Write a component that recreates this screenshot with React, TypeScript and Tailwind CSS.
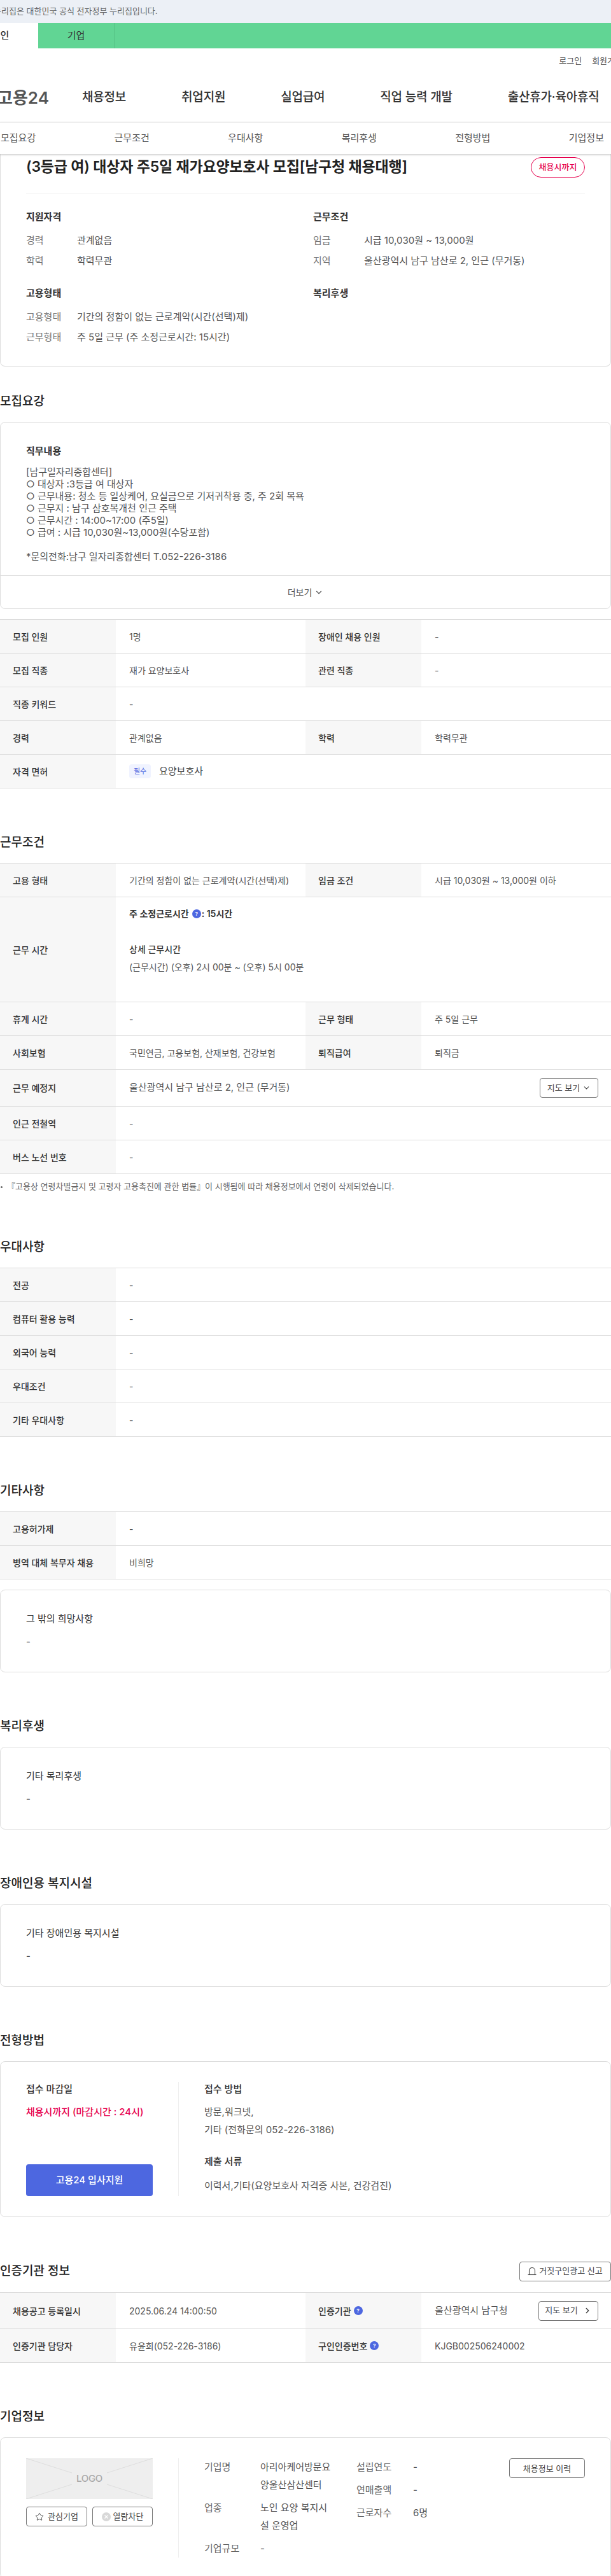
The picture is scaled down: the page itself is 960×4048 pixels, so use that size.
import React from "react";
import { ChevronDown, ChevronRight, Star } from "lucide-react";

const Help = ({ className = "" }: { className?: string }) => (
  <span className={`inline-flex h-[14px] w-[14px] shrink-0 items-center justify-center rounded-full bg-[#4d67e0] text-[8px] font-bold leading-none text-white ${className}`}>?</span>
);

const Row = ({ h = "h-[53px]", children }: { h?: string; children: React.ReactNode }) => (
  <div className={`flex border-b border-[#ddd] ${h}`}>{children}</div>
);

const L = ({ children }: { children: React.ReactNode }) => (
  <div className="flex w-[182px] shrink-0 items-center gap-1 bg-[#f7f7f7] pl-5 text-[14px] font-medium text-[#333]">{children}</div>
);

const V = ({ children, wide }: { children: React.ReactNode; wide?: boolean }) => (
  <div className={`flex items-center pl-[21px] text-[14px] text-[#555] ${wide ? "flex-1 pr-5" : "w-[298px] shrink-0"}`}>{children}</div>
);

const Table = ({ children }: { children: React.ReactNode }) => (
  <div className="border-t border-[#ddd]">{children}</div>
);

const Heading = ({ children, top = "mt-[71px]" }: { children: React.ReactNode; top?: string }) => (
  <h2 className={`${top} mb-[18px] h-[28px] text-[19px] font-medium leading-[28px] text-[#222]`}>{children}</h2>
);

const Card = ({ children, className = "" }: { children: React.ReactNode; className?: string }) => (
  <div className={`rounded-lg border border-[#ddd] bg-white ${className}`}>{children}</div>
);

const SimpleCard = ({ title, className = "" }: { title: string; className?: string }) => (
  <Card className={`h-[130px] px-10 pt-[35px] ${className}`}>
    <div className="h-[20px] text-[15px] leading-[20px] text-[#333]">{title}</div>
    <div className="mt-4 h-[20px] text-[15px] leading-[20px] text-[#555]">-</div>
  </Card>
);

const OutlineBtn = ({ children, className = "" }: { children: React.ReactNode; className?: string }) => (
  <button className={`flex h-[31px] items-center justify-center rounded border border-[#777] bg-white text-[13px] text-[#444] ${className}`}>{children}</button>
);

const InfoRow = ({ k, v }: { k: string; v: string }) => (
  <div className="flex h-[32px] items-center text-[15px] text-[#555]">
    <div className="w-[80px] shrink-0 text-[#777]">{k}</div>
    <div>{v}</div>
  </div>
);

const GroupTitle = ({ children, className = "" }: { children: React.ReactNode; className?: string }) => (
  <div className={`mb-[10px] h-[22px] text-[15px] font-semibold leading-[22px] text-[#333] ${className}`}>{children}</div>
);

export default function App() {
  return (
    <div className="h-[4048px] w-[960px] overflow-hidden bg-white font-['Inter','Noto_Sans_CJK_KR',sans-serif]">
      <div className="flex h-[36px] items-center bg-[#ecf0f6] pl-0 text-[13px] text-[#666]">
        <span className="-ml-[10px]">누리집은 대한민국 공식 전자정부 누리집입니다.</span>
      </div>
      <div className="flex h-[40px] bg-[#61d594] text-[15px] text-[#333]">
        <div className="-ml-[59px] flex w-[119px] items-center justify-center bg-white font-medium">개인</div>
        <div className="flex w-[120px] items-center justify-center border-r border-[#55c285]">기업</div>
      </div>
      <div className="-mr-[18px] flex h-[40px] items-center justify-end gap-4 text-[13px] text-[#555]">
        <span>로그인</span>
        <span>회원가입</span>
      </div>
      <div className="flex h-[76px] items-center pb-[1px] text-[19px] font-medium text-[#333]">
        <span className="-ml-[4px] mr-[52px] text-[26px] font-semibold text-[#555]">고용24</span>
        <div className="flex gap-[87px] whitespace-nowrap tracking-[-0.2px]">
          <span>채용정보</span>
          <span>취업지원</span>
          <span>실업급여</span>
          <span>직업 능력 개발</span>
          <span>출산휴가·육아휴직</span>
        </div>
      </div>
      <div className="relative z-10 flex h-[50px] items-center justify-between border-t border-[#eee] bg-white pl-[1px] pr-[11px] text-[15px] text-[#555] shadow-[0_1px_3px_rgba(0,0,0,0.25)]">
        <span>모집요강</span>
        <span>근무조건</span>
        <span>우대사항</span>
        <span>복리후생</span>
        <span>전형방법</span>
        <span>기업정보</span>
      </div>

      <Card className="h-[334px] rounded-t-none border-t-0 px-10 pt-[5px]">
        <div className="flex h-[32px] items-start justify-between">
          <h1 className="text-[23px] font-semibold leading-[30px] tracking-[-0.2px] text-[#222]">(3등급 여) 대상자 주5일 재가요양보호사 모집[남구청 채용대행]</h1>
          <span className="flex h-[32px] w-[85px] items-center justify-center rounded-full border border-[#e6004d] text-[13px] font-medium text-[#e6004d]">채용시까지</span>
        </div>
        <div className="mb-[26px] mt-[24px] border-t border-[#eee]" />
        <div className="grid grid-cols-[451px_1fr]">
          <div>
            <GroupTitle>지원자격</GroupTitle>
            <InfoRow k="경력" v="관계없음" />
            <InfoRow k="학력" v="학력무관" />
            <GroupTitle className="mt-6">고용형태</GroupTitle>
            <InfoRow k="고용형태" v="기간의 정함이 없는 근로계약(시간(선택)제)" />
            <InfoRow k="근무형태" v="주 5일 근무 (주 소정근로시간: 15시간)" />
          </div>
          <div>
            <GroupTitle>근무조건</GroupTitle>
            <InfoRow k="임금" v="시급 10,030원 ~ 13,000원" />
            <InfoRow k="지역" v="울산광역시 남구 남산로 2, 인근 (무거동)" />
            <GroupTitle className="mt-6">복리후생</GroupTitle>
          </div>
        </div>
      </Card>

      <Heading top="mt-[41px]">모집요강</Heading>
      <Card className="mb-4">
        <div className="px-10 pb-[20px] pt-[34px]">
          <div className="mb-3 h-[22px] text-[15px] font-semibold leading-[22px] text-[#333]">직무내용</div>
          <div className="text-[15px] leading-[19px] text-[#555]">
            <div>[남구일자리종합센터]</div>
            <div>○ 대상자 :3등급 여 대상자</div>
            <div>○ 근무내용: 청소 등 일상케어, 요실금으로 기저귀착용 중, 주 2회 목욕</div>
            <div>○ 근무지 : 남구 삼호복개천 인근 주택</div>
            <div>○ 근무시간 : 14:00~17:00 (주5일)</div>
            <div>○ 급여 : 시급 10,030원~13,000원(수당포함)</div>
            <div className="h-[19px]" />
            <div>*문의전화:남구 일자리종합센터 T.052-226-3186</div>
          </div>
        </div>
        <div className="flex h-[52px] items-center justify-center gap-1 border-t border-[#ddd] text-[14px] text-[#555]">
          더보기 <ChevronDown size={14} strokeWidth={2} />
        </div>
      </Card>

      <Table>
        <Row><L>모집 인원</L><V>1명</V><L>장애인 채용 인원</L><V wide>-</V></Row>
        <Row><L>모집 직종</L><V>재가 요양보호사</V><L>관련 직종</L><V wide>-</V></Row>
        <Row><L>직종 키워드</L><V wide>-</V></Row>
        <Row><L>경력</L><V>관계없음</V><L>학력</L><V wide>학력무관</V></Row>
        <Row>
          <L>자격 면허</L>
          <V wide>
            <span className="mr-[13px] flex h-[22px] w-[34px] items-center justify-center rounded bg-[#f0f3ff] text-[11px] text-[#4d67e0]">필수</span>
            <span className="text-[15px] text-[#444]">요양보호사</span>
          </V>
        </Row>
      </Table>

      <Heading>근무조건</Heading>
      <Table>
        <Row><L>고용 형태</L><V>기간의 정함이 없는 근로계약(시간(선택)제)</V><L>임금 조건</L><V wide>시급 10,030원 ~ 13,000원 이하</V></Row>
        <Row h="h-[165px]">
          <L>근무 시간</L>
          <div className="flex-1 pl-[21px] pt-4 text-[14px] leading-[20px] text-[#555]">
            <div className="flex items-center font-semibold text-[#333]">
              <span>주 소정근로시간</span>
              <Help className="ml-[5px] mr-[1px]" />
              <span>: 15시간</span>
            </div>
            <div className="mt-9 font-medium text-[#333]">상세 근무시간</div>
            <div className="mt-2">(근무시간) (오후) 2시 00분 ~ (오후) 5시 00분</div>
          </div>
        </Row>
        <Row><L>휴게 시간</L><V>-</V><L>근무 형태</L><V wide>주 5일 근무</V></Row>
        <Row><L>사회보험</L><V>국민연금, 고용보험, 산재보험, 건강보험</V><L>퇴직급여</L><V wide>퇴직금</V></Row>
        <Row h="h-[58px]">
          <L>근무 예정지</L>
          <V wide>
            <span className="flex-1 text-[15px]">울산광역시 남구 남산로 2, 인근 (무거동)</span>
            <OutlineBtn className="w-[92px] gap-1">지도 보기 <ChevronDown size={13} /></OutlineBtn>
          </V>
        </Row>
        <Row><L>인근 전철역</L><V wide>-</V></Row>
        <Row><L>버스 노선 번호</L><V wide>-</V></Row>
      </Table>
      <div className="mt-[10px] flex h-[20px] items-center text-[13px] text-[#666]">
        <span className="ml-[1px] mr-[7px] h-[3px] w-[3px] rounded-full bg-[#666]" />
        『고용상 연령차별금지 및 고령자 고용촉진에 관한 법률』이 시행됨에 따라 채용정보에서 연령이 삭제되었습니다.
      </div>

      <Heading>우대사항</Heading>
      <Table>
        <Row><L>전공</L><V wide>-</V></Row>
        <Row><L>컴퓨터 활용 능력</L><V wide>-</V></Row>
        <Row><L>외국어 능력</L><V wide>-</V></Row>
        <Row><L>우대조건</L><V wide>-</V></Row>
        <Row><L>기타 우대사항</L><V wide>-</V></Row>
      </Table>

      <Heading>기타사항</Heading>
      <Table>
        <Row><L>고용허가제</L><V wide>-</V></Row>
        <Row><L>병역 대체 복무자 채용</L><V wide>비희망</V></Row>
      </Table>
      <SimpleCard className="mt-4" title="그 밖의 희망사항" />

      <Heading>복리후생</Heading>
      <SimpleCard title="기타 복리후생" />

      <Heading>장애인용 복지시설</Heading>
      <SimpleCard title="기타 장애인용 복지시설" />

      <Heading>전형방법</Heading>
      <Card className="flex h-[245px] px-10 py-8">
        <div className="flex w-[240px] shrink-0 flex-col justify-between border-r border-[#eee] pr-10">
          <div>
            <div className="h-[22px] text-[15px] font-medium leading-[22px] text-[#333]">접수 마감일</div>
            <div className="mt-[15px] text-[15px] font-medium leading-[20px] text-[#e6004d]">채용시까지 (마감시간 : 24시)</div>
          </div>
          <button className="h-[50px] w-[199px] rounded bg-[#4d67e0] text-[15px] font-medium text-white">고용24 입사지원</button>
        </div>
        <div className="pl-10 text-[15px] text-[#555]">
          <div className="h-[22px] font-medium leading-[22px] text-[#333]">접수 방법</div>
          <div className="mt-[11px] leading-[28px]">방문,워크넷,<br />기타 (전화문의 052-226-3186)</div>
          <div className="mt-[25px] h-[22px] font-medium leading-[22px] text-[#333]">제출 서류</div>
          <div className="mt-[13px] leading-[28px]">이력서,기타(요양보호사 자격증 사본, 건강검진)</div>
        </div>
      </Card>

      <div className="mb-[19px] mt-[71px] flex h-[28px] items-center justify-between">
        <h2 className="text-[19px] font-medium text-[#222]">인증기관 정보</h2>
        <OutlineBtn className="w-[144px] gap-1">
          <svg width="14" height="16" viewBox="0 0 14 16" fill="none" stroke="#444" strokeWidth="1.1"><path d="M2.5 13.5V7a4.5 4.5 0 0 1 9 0v6.5" /><path d="M0.5 13.5h13" /></svg>
          거짓구인광고 신고
        </OutlineBtn>
      </div>
      <Table>
        <Row h="h-[57px]">
          <L>채용공고 등록일시</L><V>2025.06.24 14:00:50</V>
          <L>인증기관 <Help /></L>
          <V wide>
            <span className="flex-1 text-[15px]">울산광역시 남구청</span>
            <OutlineBtn className="w-[94px] gap-2">지도 보기 <ChevronRight size={14} strokeWidth={2.5} /></OutlineBtn>
          </V>
        </Row>
        <Row><L>인증기관 담당자</L><V>유윤희(052-226-3186)</V><L>구인인증번호 <Help /></L><V wide>KJGB002506240002</V></Row>
      </Table>

      <Heading>기업정보</Heading>
      <Card className="flex h-[222px] px-10 py-8">
        <div className="w-[240px] shrink-0 border-r border-[#eee] pr-10">
          <div className="relative flex h-[64px] items-center justify-center bg-[#eee]">
            <svg className="absolute inset-0 h-full w-full" viewBox="0 0 199 64" stroke="#ddd" strokeWidth="1">
              <path d="M0 0L72 23M127 23L199 0M0 64L72 41M127 41L199 64" />
            </svg>
            <span className="relative text-[15px] font-medium tracking-[-0.3px] text-[#aaa]">LOGO</span>
          </div>
          <div className="mt-3 flex justify-between">
            <OutlineBtn className="w-[96px] gap-[6px]"><Star size={14} strokeWidth={1.5} /> 관심기업</OutlineBtn>
            <OutlineBtn className="w-[95px] gap-1">
              <svg width="14" height="14" viewBox="0 0 14 14"><circle cx="7" cy="7" r="7" fill="#d8d8d8" /><path d="M4.5 4.5l5 5M9.5 4.5l-5 5" stroke="#fff" strokeWidth="1.3" /></svg>
              열람차단
            </OutlineBtn>
          </div>
        </div>
        <div className="flex flex-1 pl-10 text-[15px] leading-[28px] text-[#555]">
          <div className="w-[239px] shrink-0">
            <div className="flex"><div className="w-[88px] shrink-0 text-[#666]">기업명</div><div className="w-[112px] break-all">아리아케어방문요양울산삼산센터</div></div>
            <div className="mt-2 flex"><div className="w-[88px] shrink-0 text-[#666]">업종</div><div className="w-[112px] break-all">노인 요양 복지시설 운영업</div></div>
            <div className="mt-2 flex"><div className="w-[88px] shrink-0 text-[#666]">기업규모</div><div>-</div></div>
          </div>
          <div className="flex w-[240px] flex-col gap-2">
            <div className="flex"><div className="w-[89px] text-[#666]">설립연도</div><div>-</div></div>
            <div className="flex"><div className="w-[89px] text-[#666]">연매출액</div><div>-</div></div>
            <div className="flex"><div className="w-[89px] text-[#666]">근로자수</div><div>6명</div></div>
          </div>
          <OutlineBtn className="w-[119px]">채용정보 이력</OutlineBtn>
        </div>
      </Card>
    </div>
  );
}
